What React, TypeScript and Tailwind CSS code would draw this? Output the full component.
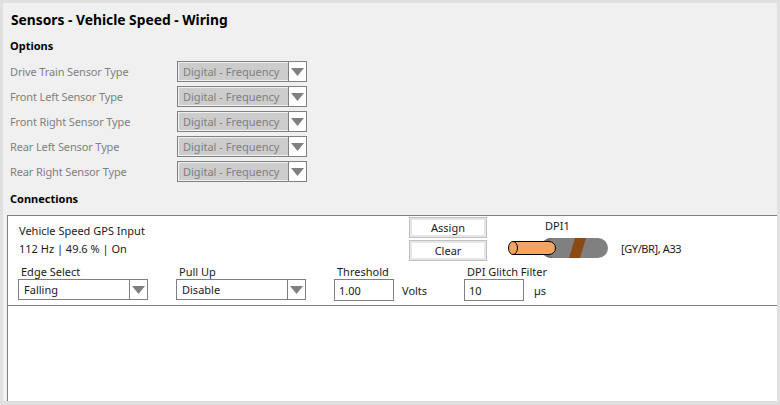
const FONT = "font-['Noto_Sans','Open_Sans',sans-serif]";

const sensorTypes = [
  "Drive Train Sensor Type",
  "Front Left Sensor Type",
  "Front Right Sensor Type",
  "Rear Left Sensor Type",
  "Rear Right Sensor Type",
];

function Arrow() {
  return (
    <svg width="13" height="8" viewBox="0 0 13 8" className="block">
      <polygon points="0,0 13,0 6.5,8" fill="#808080" />
    </svg>
  );
}

function DisabledCombo() {
  return (
    <div className="flex h-[21px] w-[130px] border border-[#808080] bg-white">
      <div className="flex w-[110px] items-center border border-r-0 border-[#f0f0f0] bg-[#cccccc] pl-[4px] text-[#808080]">
        Digital - Frequency
      </div>
      <div className="flex flex-1 items-center justify-center border-l border-[#808080]">
        <Arrow />
      </div>
    </div>
  );
}

function Combo({ value }: { value: string }) {
  return (
    <div className="flex h-[21px] w-[130px] border border-[#808080] bg-white">
      <div className="flex w-[110px] items-center pl-[5px] text-[#1a1a1a]">{value}</div>
      <div className="flex flex-1 items-center justify-center border-l border-[#808080]">
        <Arrow />
      </div>
    </div>
  );
}

function Field({ value, width }: { value: string; width: string }) {
  return (
    <div className={`flex h-[22px] items-center border border-[#808080] bg-white pl-[4px] text-[#1a1a1a] ${width}`}>
      {value}
    </div>
  );
}

function FlatButton({ label }: { label: string }) {
  return (
    <div className="flex h-[21px] w-[78px] items-center justify-center border border-[#c0c0c0] bg-white text-[#1a1a1a]">
      <div className="flex h-full w-full items-center justify-center border-2 border-[#e6e6e6]">{label}</div>
    </div>
  );
}

function Wire() {
  return (
    <svg width="102" height="22" viewBox="0 0 102 22" className="block">
      <rect x="34" y="1" width="67" height="20" rx="10" fill="#808080" />
      <path d="M34 11a10 10 0 0 1 10-10h2a11 11 0 0 0 0 20h-2a10 10 0 0 1-10-10z" fill="#6e6e6e" />
      <polygon points="68,1 79,1 73,21 62,21" fill="#8b4a14" />
      <path d="M6 4.5h36a6.5 6.5 0 0 1 0 13H6z" fill="#f4a460" stroke="#000" strokeWidth="1" />
      <ellipse cx="6" cy="11" rx="4.5" ry="6.5" fill="#f4a460" stroke="#000" strokeWidth="1" />
    </svg>
  );
}

export default function App() {
  return (
    <div className={`${FONT} flex h-[405px] w-[780px] flex-col border-x-[3px] border-t-[3px] border-b-[4px] border-[#e0e0e0] bg-[#f0f0f0] text-[11px] leading-none`}>
      <div className="flex h-[34px] items-center pl-[8px] text-[13.8px] font-bold text-black">
        Sensors - Vehicle Speed - Wiring
      </div>

      <div className="mt-[3px] pl-[7px] text-[11px] font-bold text-black">Options</div>

      <div className="mt-[10px] flex flex-col gap-[4px]">
        {sensorTypes.map((name) => (
          <div key={name} className="flex items-center pl-[7px]">
            <div className="w-[167px] tracking-[-0.13px] text-[#808080]">{name}</div>
            <DisabledCombo />
          </div>
        ))}
      </div>

      <div className="mt-[11px] pl-[7px] text-[11px] font-bold text-black">Connections</div>

      <div className="mt-[11px] ml-[4px] flex flex-1 flex-col border-l border-t border-[#808080] bg-white">
        <div className="flex h-[90px] flex-col border-b border-[#808080]">
          <div className="flex h-[50px]">
            <div className="w-[401px] pl-[11px] pt-[9px] text-[#1a1a1a]">
              <div>Vehicle Speed GPS Input</div>
              <div className="mt-[7px]">112 Hz | 49.6 % | On</div>
            </div>
            <div className="mt-[1px] flex flex-col gap-[2px]">
              <FlatButton label="Assign" />
              <FlatButton label="Clear" />
            </div>
            <div className="ml-[20px] flex flex-col">
              <div className="mt-[4px] pl-[38px] text-[#1a1a1a]">DPI1</div>
              <div className="mt-[6px]">
                <Wire />
              </div>
            </div>
            <div className="ml-[12px] pt-[27px] tracking-[-0.4px] text-[#1a1a1a]">[GY/BR], A33</div>
          </div>
          <div className="flex text-[#1a1a1a]">
            <div className="ml-[10px] w-[158px]">
              <div className="mb-[2px] pl-[3px]">Edge Select</div>
              <Combo value="Falling" />
            </div>
            <div className="w-[158px]">
              <div className="mb-[2px] pl-[3px]">Pull Up</div>
              <Combo value="Disable" />
            </div>
            <div className="w-[130px]">
              <div className="mb-[2px] pl-[3px]">Threshold</div>
              <div className="flex items-center">
                <Field value="1.00" width="w-[60px]" />
                <span className="ml-[8px]">Volts</span>
              </div>
            </div>
            <div>
              <div className="mb-[2px] pl-[3px]">DPI Glitch Filter</div>
              <div className="flex items-center">
                <Field value="10" width="w-[60px]" />
                <span className="ml-[10px]">µs</span>
              </div>
            </div>
          </div>
        </div>
      </div>
    </div>
  );
}
